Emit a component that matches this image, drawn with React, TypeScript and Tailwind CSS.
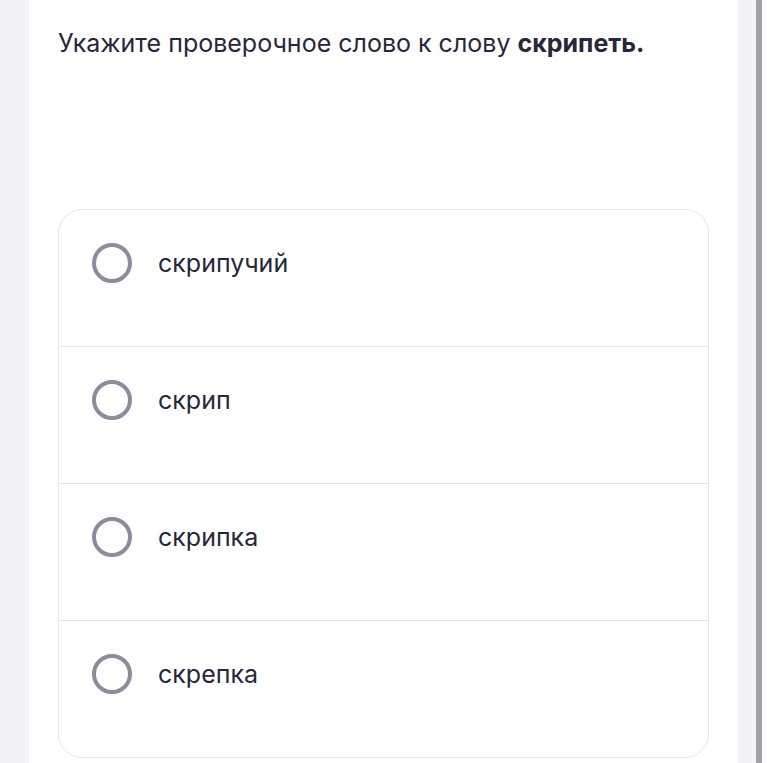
import React from 'react';

const options = ['скрипучий', 'скрип', 'скрипка', 'скрепка'];

function Option({ label, first }: { label: string; first: boolean }) {
  return (
    <label
      className={
        'flex items-start pt-[33px] pl-[33px] cursor-pointer ' +
        (first ? 'h-[136px]' : 'h-[137px] border-t border-[#e6e5eb]')
      }
    >
      <span className="flex items-center h-[40px]">
        <span className="w-[40px] h-[40px] rounded-full border-[4px] border-[#8e8c9c] shrink-0" />
        <span className="ml-[26px] text-[25px] leading-8 text-[#27263a]">{label}</span>
      </span>
    </label>
  );
}

export default function App() {
  return (
    <div
      className="flex h-[763px] w-[767px] bg-[#f2f2f7] overflow-hidden"
      style={{ fontFamily: 'Inter, "Noto Sans", sans-serif' }}
    >
      <div className="ml-[29px] w-[709px] bg-white pl-[29px] pt-[27px]">
        <h1 className="text-[25px] leading-8 text-[#27263a]">
          Укажите проверочное слово к слову <b className="font-bold">скрипеть.</b>
        </h1>
        <div className="mt-[150px] w-[651px] rounded-[24px] border border-[#e6e5eb] overflow-hidden">
          {options.map((o, i) => (
            <Option key={o} label={o} first={i === 0} />
          ))}
        </div>
      </div>
      <div className="ml-[18px] w-[6px] bg-[#a2a1a7]" />
      <div className="flex-1 bg-white" />
    </div>
  );
}
